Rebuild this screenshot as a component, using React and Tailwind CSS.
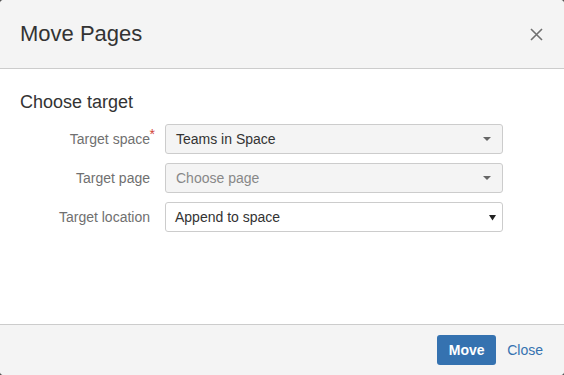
export default function App() {
  const font = { fontFamily: '"Liberation Sans", Arial, sans-serif' };
  return (
    <div className="w-[564px] h-[375px] bg-[#555]" style={font}>
      <div className="w-full h-full rounded-[4px] overflow-hidden bg-white flex flex-col">
        <div className="h-[69px] shrink-0 bg-[#f4f4f4] border-b border-[#ccc] flex items-center justify-between pl-[20px] pr-[21px]">
          <h1 className="text-[22px] text-[#333] leading-none pb-[1px]">Move Pages</h1>
          <svg width="13" height="13" viewBox="0 0 13 13" className="mt-[1px]">
            <path d="M1 1L12 12M12 1L1 12" stroke="#707070" strokeWidth="1.6" />
          </svg>
        </div>
        <div className="flex-1 px-[20px] pt-[24px]">
          <h2 className="text-[18px] text-[#333] leading-none">Choose target</h2>
          <div className="mt-[13px] flex flex-col gap-[9px]">
            <Row label="Target space" required value="Teams in Space" />
            <Row label="Target page" value="Choose page" placeholder />
            <Row label="Target location" value="Append to space" native />
          </div>
        </div>
        <div className="h-[51px] shrink-0 bg-[#f4f4f4] border-t border-[#ccc] flex items-center justify-end pr-[21px] gap-[11px]">
          <button className="h-[30px] w-[59px] rounded-[3px] bg-[#3572b0] text-white font-bold text-[14px]">Move</button>
          <a className="text-[14px] text-[#3572b0]">Close</a>
        </div>
      </div>
    </div>
  );
}

function Row({ label, required, value, placeholder, native }) {
  return (
    <div className="flex items-center h-[30px]">
      <div className="w-[145px] shrink-0 text-right text-[14px] text-[#707070] relative pr-[15px]">
        {label}
        {required && <span className="absolute right-[10px] -top-[5px] text-[#d04437] text-[14px]">*</span>}
      </div>
      <div
        className={
          "w-[338px] h-[30px] rounded-[3px] border border-[#ccc] flex items-center justify-between " +
          (native ? "bg-white pl-[9px] pr-[6px]" : "bg-[#f4f4f4] pl-[10px] pr-[11px]")
        }
      >
        <span className={"text-[14px] " + (placeholder ? "text-[#888]" : "text-[#333]")}>{value}</span>
        {native ? (
          <svg width="7" height="7" viewBox="0 0 7 7"><path d="M0 1H7L3.5 6.5Z" fill="#222" /></svg>
        ) : (
          <svg width="8" height="4" viewBox="0 0 8 4"><path d="M0 0H8L4 4Z" fill="#666" /></svg>
        )}
      </div>
    </div>
  );
}
